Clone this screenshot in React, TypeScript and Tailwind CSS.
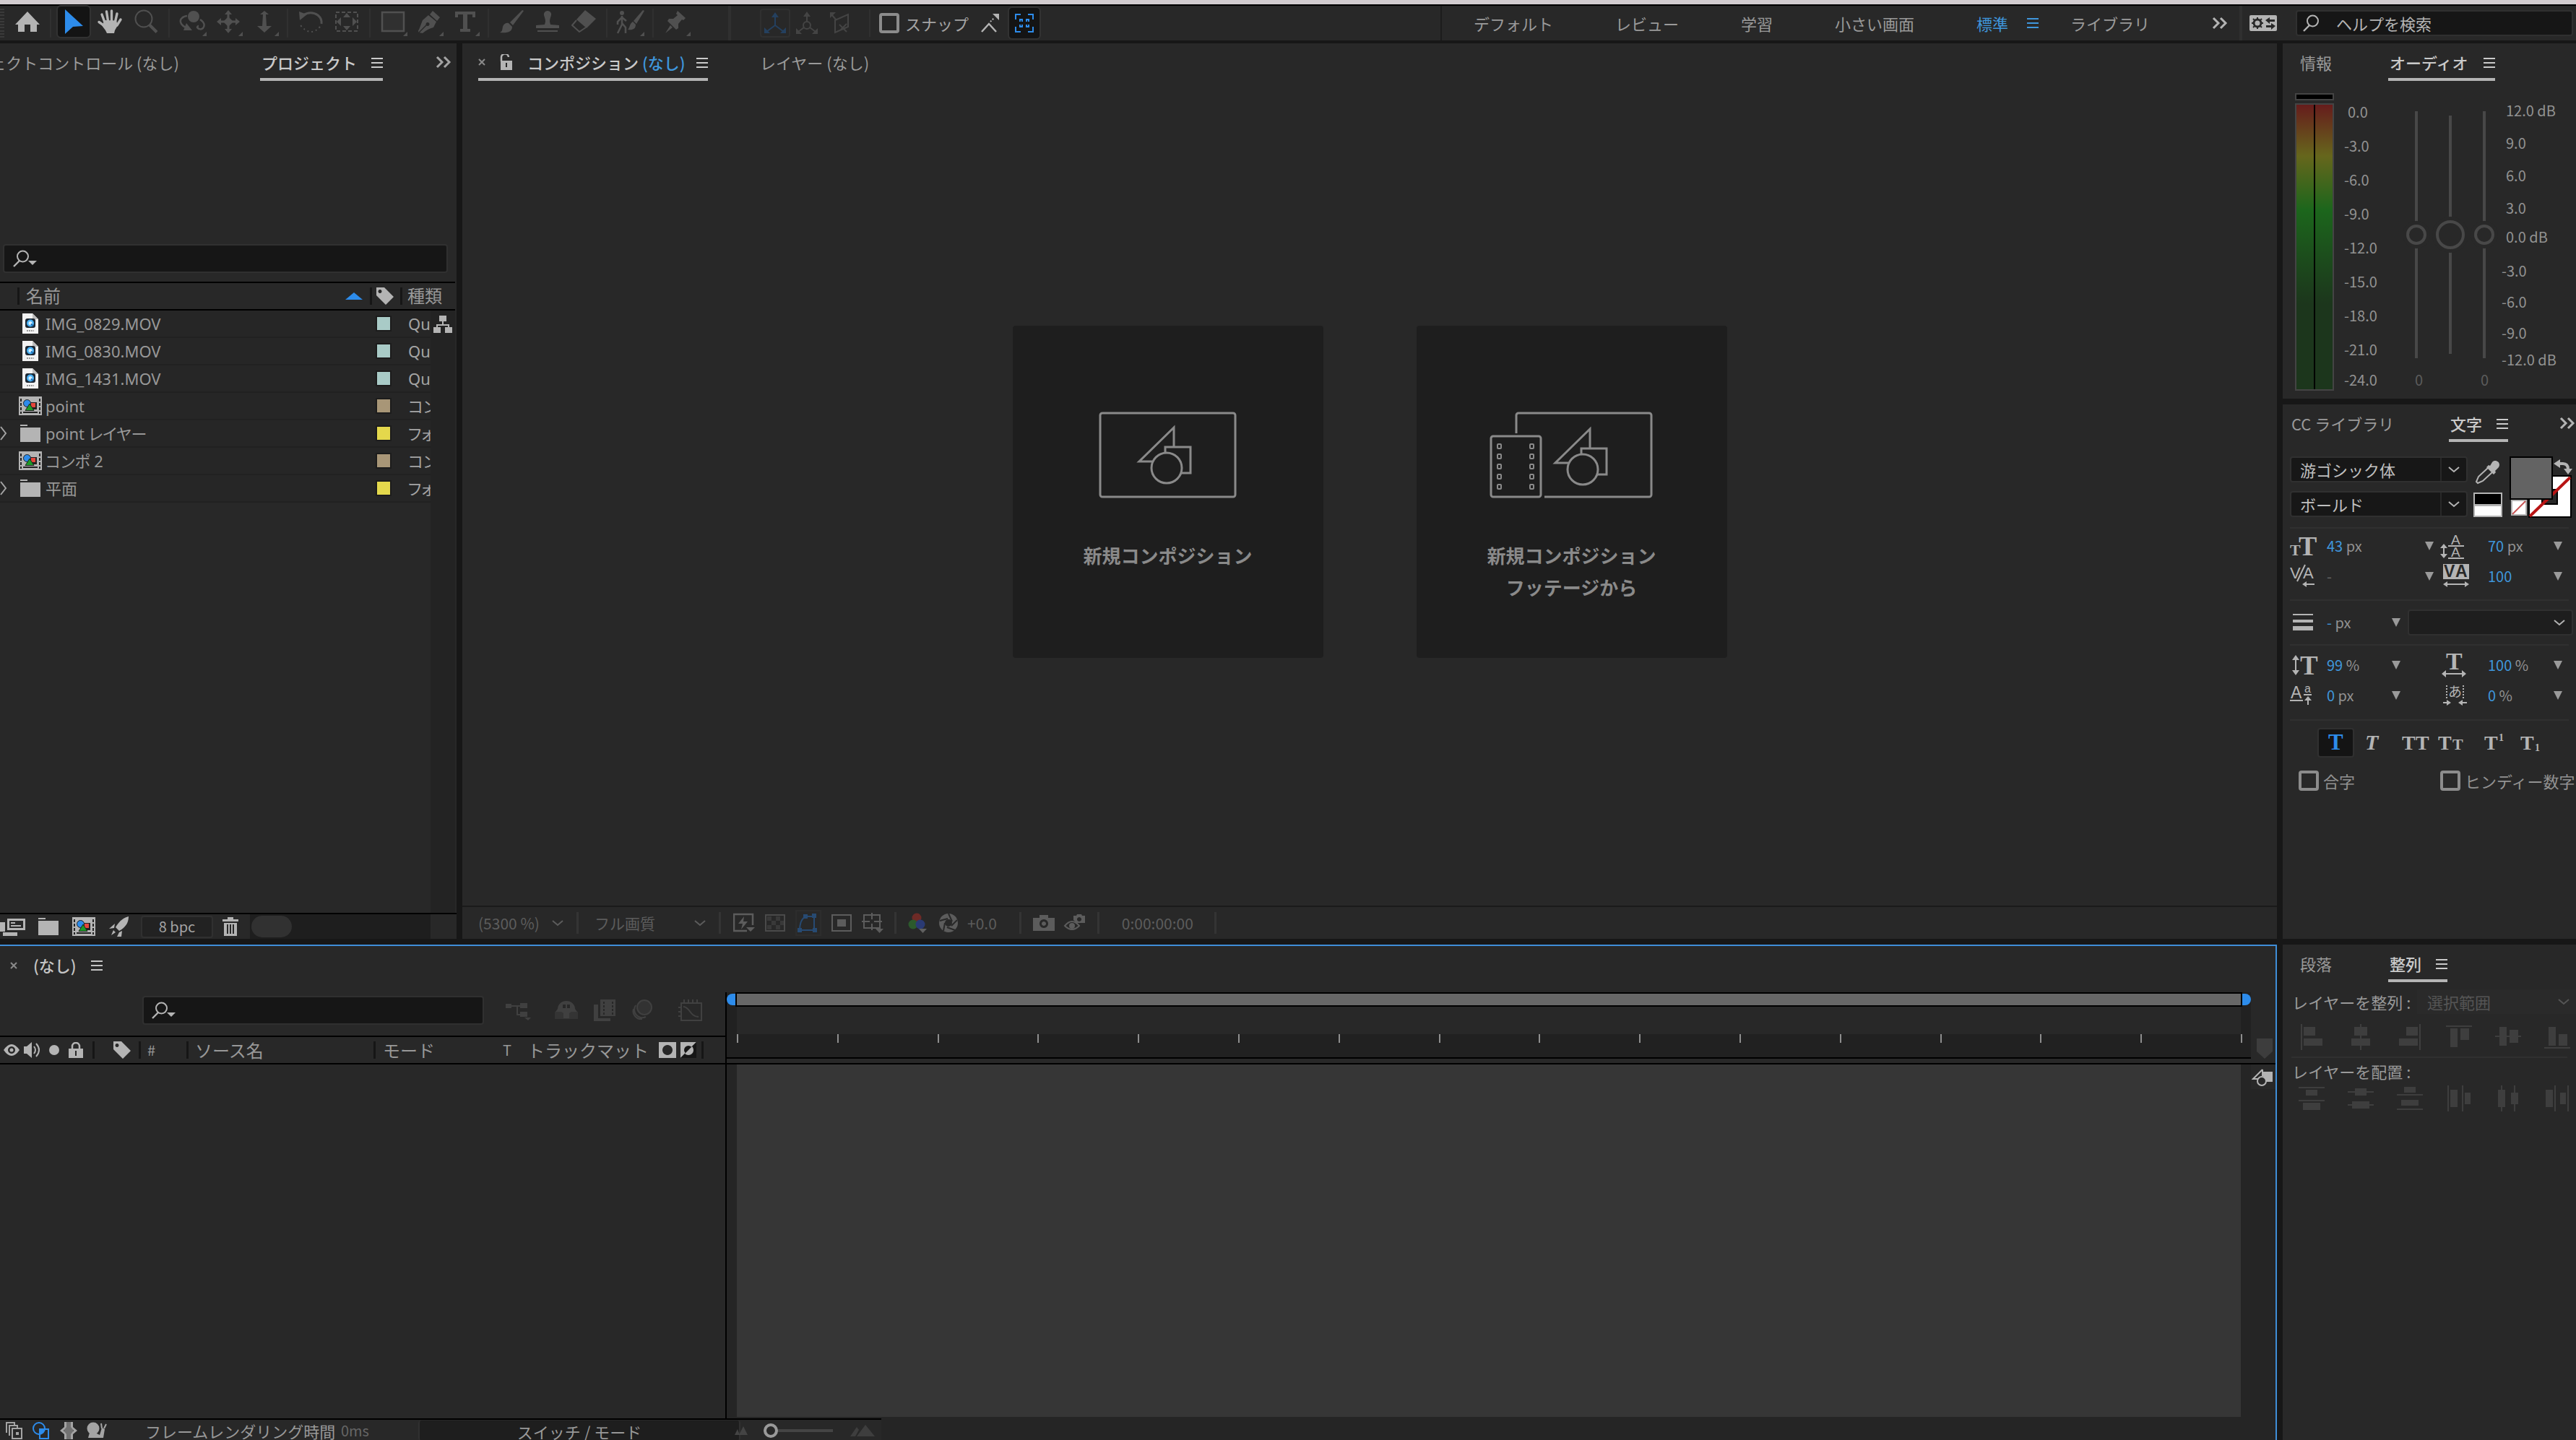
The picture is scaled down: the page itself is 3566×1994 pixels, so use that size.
import React, { ReactNode } from "react";

/* ---------- shared pieces ---------- */

type IconProps = { w?: number; h?: number; className?: string; children: ReactNode };

function Icon({ w = 36, h = 36, className = "", children }: IconProps) {
  return (
    <svg
      width={w}
      height={h}
      viewBox={`0 0 ${w} ${h}`}
      fill="currentColor"
      aria-hidden="true"
      className={`block shrink-0 ${className}`}
    >
      {children}
    </svg>
  );
}

const line = { fill: "none", stroke: "currentColor" } as const;

const MenuIcon = () => (
  <Icon w={16} h={14}>
    <path d="M0 0h16v2H0zM0 6h16v2H0zM0 12h16v2H0z" />
  </Icon>
);

const MoreIcon = () => (
  <Icon w={22} h={18}>
    <path d="M2 2l7 7-7 7M12 2l7 7-7 7" {...line} strokeWidth={3} />
  </Icon>
);

const CloseIcon = () => (
  <Icon w={10} h={12} className="text-[#8a8a8a]">
    <path d="M1 2l8 8M9 2l-8 8" {...line} strokeWidth={2} />
  </Icon>
);

const Chevron = () => (
  <Icon w={16} h={10}>
    <path d="M1 2l7 6 7-6" {...line} strokeWidth={2} />
  </Icon>
);

const Triangle = () => (
  <Icon w={12} h={12}>
    <path d="M0 0h12L6 12z" />
  </Icon>
);

const SearchIcon = ({ caret = false }: { caret?: boolean }) => (
  <Icon w={34} h={24}>
    <circle cx="13.500" cy="9" r="7.500" {...line} strokeWidth={2} />
    <path d="M9 15L1 23" {...line} strokeWidth={2.4} />
    {caret && <path d="M21 15h12l-6 6z" />}
  </Icon>
);

const TagIcon = () => (
  <Icon w={24} h={24}>
    <path fillRule="evenodd" d="M0 0h11l13 13-11 11L0 11zM5 3a2.500 2.500 0 1 0 .01 0z" />
  </Icon>
);

const CompIcon = () => (
  <Icon w={32} h={26}>
    <path d="M0 0h32v26H0z" />
    <path d="M2 3h2v4H2zM2 9h2v4H2zM2 15h2v4H2zM2 21h2v3H2zM28 3h2v4h-2zM28 9h2v4h-2zM28 15h2v4h-2zM28 21h2v3h-2zM6 21h20v2H6z" fill="#222" />
    <path d="M16 8h9v10h-9z" fill="#222" />
    <path d="M17 9h6v6h-6z" fill="#e5473c" />
    <circle cx="11.500" cy="9.500" r="5" fill="#2d8ceb" stroke="#222" strokeWidth="1" />
    <path d="M15 10l6 9.500H9z" fill="#1e9a28" stroke="#222" strokeWidth="1" />
  </Icon>
);

const FolderIcon = () => (
  <Icon w={28} h={24}>
    <path d="M0 0h10v2H0zM0 4h28v20H0z" />
  </Icon>
);

const MovieFileIcon = () => (
  <Icon w={22} h={28}>
    <path d="M0 0h14l8 8v20H0z" fill="#f2f2f2" />
    <path d="M14 0l8 8h-8z" fill="#bdbdbd" />
    <rect x="4" y="7" width="14" height="13" rx="3" fill="#1c2733" />
    <circle cx="11" cy="13.500" r="5" fill="#49b2f5" />
    <circle cx="11" cy="13.500" r="2.500" fill="#d6eeff" />
    <path d="M12 14.500l3 3" stroke="#1c6fb5" strokeWidth="2" />
    <path d="M6 24h10" stroke="#999" strokeWidth="2" strokeDasharray="2 1" />
  </Icon>
);

type TabProps = { active?: boolean; className?: string; children: ReactNode };

function Tab({ active = false, className = "", children }: TabProps) {
  return (
    <button
      type="button"
      className={`flex h-[52px] shrink-0 items-center justify-between border-b-4 pt-[6px] whitespace-nowrap ${
        active ? "border-[#b4b4b4] font-medium text-[#cacaca]" : "border-transparent text-[#9a9a9a]"
      } ${className}`}
    >
      <span className="pb-[3px]">{children}</span>
      {active && <MenuIcon />}
    </button>
  );
}

/* ---------- top tool bar ---------- */

const ToolSep = () => <div className="mx-[6px] h-[40px] w-[2px] shrink-0 bg-[#303030]" />;

type ToolProps = { label: string; more?: boolean; className?: string; children: ReactNode };

function Tool({ label, more = false, className = "text-[#505050]", children }: ToolProps) {
  return (
    <button
      type="button"
      aria-label={label}
      className={`relative flex h-[48px] w-[50px] shrink-0 items-center justify-center pb-1 ${className}`}
    >
      {children}
      {more && (
        <svg width="6" height="6" viewBox="0 0 6 6" fill="currentColor" className="absolute right-[5px] bottom-[6px]">
          <path d="M6 0v6H0z" />
        </svg>
      )}
    </button>
  );
}

function Toolbar() {
  const workspaces = [
    ["デフォルト", "ml-[44px] w-[196px]"],
    ["レビュー", "w-[174px]"],
    ["学習", "w-[130px]"],
    ["小さい画面", "w-[196px]"],
  ];
  return (
    <header className="flex h-[48px] shrink-0 items-center bg-[#282828]">
      <div className="flex h-[40px] w-[13px] shrink-0 flex-col justify-between">
        {Array.from({ length: 10 }, (_, i) => (
          <i key={i} className="h-[2px] w-[6px] bg-[#3a3a3a]" />
        ))}
      </div>
      <Tool label="ホーム" className="text-[#b4b4b4]">
        <Icon><path d="M18 4l17 18h-4v10h-9V22h-8v10H5V22H1z" /></Icon>
      </Tool>
      <ToolSep />
      <Tool label="選択ツール" className="text-[#2d8ceb]">
        <span className="flex h-[42px] w-[44px] items-center justify-center rounded-sm bg-[#141414] outline-2 outline-[#323232]">
          <Icon><path d="M6 1l25 23-14 1L6 35z" /></Icon>
        </span>
      </Tool>
      <Tool label="手のひらツール" className="text-[#b4b4b4]">
        <Icon>
          <path d="M11 19l-4-11M15.500 17L13.500 4M20.500 17V3M25.500 18l2.500-11M11 24l-8-5.500M28 23l5-8" {...line} strokeWidth={3.4} strokeLinecap="round" />
          <path d="M9.500 16l17.500.500 2 6.500-4 7-1 4H14l-2-4-6-8 3-1z" />
        </Icon>
      </Tool>
      <Tool label="ズームツール">
        <Icon>
          <circle cx="15" cy="14" r="11.500" {...line} strokeWidth={2} />
          <path d="M23 22.500l10 10" {...line} strokeWidth={4} />
        </Icon>
      </Tool>
      <ToolSep />
      <Tool label="カメラ周回ツール" more>
        <Icon>
          <circle cx="20" cy="11" r="8" />
          <path d="M11 10C3 11 0 16 3 21c2 3 5 5 9 6M29 15c6 4 7 8 4 12-2 2-6 2-8-1 0-1 1-2 2-2" {...line} strokeWidth={2.500} />
          <path d="M10 20l8 10H6z" />
        </Icon>
      </Tool>
      <Tool label="カメラ移動ツール" more>
        <Icon>
          <path d="M18 5v26M5 18h26" {...line} strokeWidth={3} />
          <path d="M18 2l5 6H13zM18 34l5-6H13zM2 18l6-5v10zM34 18l-6-5v10zM18 11l7 7-7 7-7-7z" />
        </Icon>
      </Tool>
      <Tool label="ドリーツール" more>
        <Icon>
          <path d="M16 8h4l1 16h-6z" />
          <path d="M18 3l6 5H12zM18 33L8 24h20z" />
        </Icon>
      </Tool>
      <ToolSep />
      <Tool label="回転ツール">
        <Icon>
          <path d="M8 9a15 13 0 0 1 20 0q6 5 5 12" {...line} strokeWidth={3} />
          <path d="M2 4l11 4-10 8z" />
          <path d="M31 25Q18 40 4 23" {...line} strokeWidth={2} strokeDasharray="2 4" />
        </Icon>
      </Tool>
      <Tool label="アンカーポイントツール">
        <Icon>
          <rect x="3" y="5" width="30" height="26" {...line} strokeWidth={2} strokeDasharray="5 3" />
          <path d="M18 6l5 6H13zM18 30l5-6H13zM4 18l6-6v12zM32 18l-6-6v12z" />
        </Icon>
      </Tool>
      <ToolSep />
      <Tool label="長方形ツール" more>
        <Icon><rect x="3" y="5" width="30" height="26" fill="#303030" stroke="currentColor" strokeWidth={2.500} /></Icon>
      </Tool>
      <Tool label="ペンツール" more>
        <Icon>
          <path d="M23 3l10 9-4 5-10-9z" />
          <path fillRule="evenodd" d="M17 9l11 9-4 8q-8 2-15 8l-5-1q-2-2 0-4l5-13zm-1 10a2.500 2.500 0 1 0 .01 0z" />
          <path d="M4 33l11-11" stroke="#282828" strokeWidth="1.500" />
        </Icon>
      </Tool>
      <Tool label="文字ツール" more>
        <Icon><path d="M4 4h28v8h-4V8h-7v20h4v4H11v-4h4V8H8v4H4z" /></Icon>
      </Tool>
      <ToolSep />
      <Tool label="ブラシツール">
        <Icon>
          <path d="M33 2l2 1-15 20-4-4z" />
          <path d="M14 20l5 5c0 7-6 9-17 8 4-2 3-4 4-8s5-6 8-5z" />
        </Icon>
      </Tool>
      <Tool label="コピースタンプツール">
        <Icon>
          <path d="M18 3a5 5 0 0 1 5 6c-1 4-2 5-2 9l1 4 12 1v4H2v-4l12-1 1-4c0-4-1-5-2-9a5 5 0 0 1 5-6zM4 30h28v2H4z" />
        </Icon>
      </Tool>
      <Tool label="消しゴムツール">
        <Icon>
          <path d="M20 2l15 12-13 13L8 15z" />
          <path d="M8 16L2 23l10 9 9-6" {...line} strokeWidth={2} />
        </Icon>
      </Tool>
      <ToolSep />
      <Tool label="ロトブラシツール" more>
        <Icon w={40}>
          <path d="M38 2l2 1-11 18-4-4z" />
          <path d="M24 18l4 4c0 6-4 8-11 7 3-2 2-8 7-11z" />
          <circle cx="9" cy="6" r="3" />
          <path d="M9 10v12l-6 12M9 20l5 6v8M9 12l-6 6v4M9 12l6 5" {...line} strokeWidth={2.500} />
        </Icon>
      </Tool>
      <ToolSep />
      <Tool label="パペットピンツール" more>
        <Icon>
          <path d="M20 3l11 10-3 3-2-1-5 6v6l-3 2L6 17l2-3h6l6-5-2-2zM10 23l3 3-10 8z" />
        </Icon>
      </Tool>

      <div className="ml-[47px] h-[48px] w-[4px] bg-[#303030]" />
      <div className="ml-[40px] flex items-center text-[#444]">
        <button type="button" aria-label="ローカル軸モード" className="flex h-[40px] w-[42px] items-center justify-center rounded-sm border-2 border-[#303030] text-[#24405f]">
          <Icon w={32} h={32}><path d="M16 6v13M16 19L4 28M16 19l12 9" {...line} strokeWidth={2} /><path d="M16 1l5 7H11zM1 30v-8l8 8zM31 30v-8l-8 8z" /></Icon>
        </button>
        <button type="button" aria-label="ワールド軸モード" className="flex w-[46px] justify-center">
          <Icon w={32} h={32}><circle cx="16" cy="19" r="5" {...line} strokeWidth={2} /><path d="M16 6v8M12 22l-8 6M20 22l8 6" {...line} strokeWidth={2} /><path d="M16 0l5 7H11zM1 31v-8l8 8zM31 31v-8l-8 8z" /></Icon>
        </button>
        <button type="button" aria-label="ビュー軸モード" className="flex w-[46px] justify-center">
          <Icon w={32} h={32}><path d="M9 12L27 4v17L9 29zM4 4l7 8M15 18l10 10M25 17l-8 8" {...line} strokeWidth={2} /><path d="M2 1h8l-8 8z" /></Icon>
        </button>
        <div className="ml-[17px] h-[38px] w-[2px] bg-[#303030]" />
      </div>
      <label className="ml-[12px] flex items-center gap-[8px] text-[#a4a4a4]">
        <input type="checkbox" className="h-[28px] w-[28px] appearance-none rounded-sm border-4 border-[#8c8c8c]" />
        スナップ
      </label>
      <button type="button" aria-label="スナップの拡張" className="ml-[16px] text-[#b4b4b4]">
        <Icon w={28} h={28}><path d="M2 26l10-11 10 11" {...line} strokeWidth={2.500} /><path d="M14 12l5-5" {...line} strokeWidth={2} strokeDasharray="2 2" /><path d="M17 1h9v9z" /></Icon>
      </button>
      <button type="button" aria-label="コラップスへのスナップ" className="ml-[12px] flex h-[42px] w-[42px] items-center justify-center rounded-sm bg-[#141414] text-[#2d8ceb] outline-2 outline-[#323232]">
        <Icon w={26} h={26}>
          <path d="M1 8V1h7M18 1h7v7M1 18v7h7M18 25h7v-7M7 11V8h3v3M16 11V8h3v3M7 15v3h3v-3M16 15v3h3v-3" {...line} strokeWidth={2} />
        </Icon>
      </button>

      <div className="flex-1" />
      <div className="h-[48px] w-[2px] shrink-0 bg-[#1c1c1c]" />
      <nav className="flex shrink-0 items-center text-[#9a9a9a]">
        {workspaces.map(([name, cls]) => (
          <button key={name} type="button" className={`shrink-0 text-left whitespace-nowrap ${cls}`}>
            {name}
          </button>
        ))}
        <button type="button" className="flex w-[130px] items-center gap-[26px] text-[#3f96dc]">
          標準 <MenuIcon />
        </button>
        <button type="button" className="w-[196px] text-left">ライブラリ</button>
        <button type="button" aria-label="その他のワークスペース" className="w-[38px] text-[#b4b4b4]"><MoreIcon /></button>
      </nav>
      <div className="h-[48px] w-[4px] shrink-0 bg-[#303030]" />
      <button type="button" aria-label="設定の同期" className="ml-[10px] shrink-0 text-[#b4b4b4]">
        <Icon w={38} h={22}>
          <rect width="38" height="22" rx="2" />
          <circle cx="11" cy="11" r="5" fill="none" stroke="#282828" strokeWidth="3" />
          <path d="M11 3v3M11 16v3M3 11h3M16 11h3M5 5l2 2M17 5l-2 2M5 17l2-2M17 17l-2-2" stroke="#282828" strokeWidth="2" />
          <path d="M22 7l6-4v3h7v3h-7v3zM36 15l-6-4v3h-7v3h7v3z" fill="#282828" />
        </Icon>
      </button>
      <label className="mr-[4px] ml-[26px] flex h-[36px] w-[384px] shrink-0 items-center rounded-sm border-2 border-[#303030] bg-[#161616] pl-[8px] text-[#b4b4b4]">
        <SearchIcon />
        <input aria-label="ヘルプを検索" placeholder="ヘルプを検索" className="ml-[12px] w-0 flex-1 bg-transparent outline-none placeholder:text-[#b4b4b4]" />
      </label>
    </header>
  );
}

/* ---------- project panel ---------- */

const items = [
  { name: "IMG_0829.MOV", icon: "movie", color: "#a9cbc7", kind: "QuickTime" },
  { name: "IMG_0830.MOV", icon: "movie", color: "#a9cbc7", kind: "QuickTime" },
  { name: "IMG_1431.MOV", icon: "movie", color: "#a9cbc7", kind: "QuickTime" },
  { name: "point", icon: "comp", color: "#a89677", kind: "コンポ" },
  { name: "point レイヤー", icon: "folder", color: "#e4d84c", kind: "フォルダー" },
  { name: "コンポ 2", icon: "comp", color: "#a89677", kind: "コンポ" },
  { name: "平面", icon: "folder", color: "#e4d84c", kind: "フォルダー" },
];

function ProjectPanel() {
  return (
    <section className="flex w-[632px] shrink-0 flex-col bg-[#282828]">
      <div className="flex h-[60px] items-start">
        <div className="flex w-[248px] shrink-0 justify-end overflow-hidden"><Tab>ェクトコントロール (なし)</Tab></div>
        <Tab active className="ml-[112px] w-[170px]"><span className="pl-[2px]">プロジェクト</span></Tab>
        <button type="button" aria-label="その他のパネル" className="mt-[17px] ml-[73px] text-[#a4a4a4]"><MoreIcon /></button>
      </div>
      <div className="h-[218px]" />
      <label className="mr-[12px] ml-[4px] flex h-[40px] items-center rounded-sm border-2 border-[#303030] bg-[#161616] pl-[12px] text-[#b4b4b4]">
        <SearchIcon caret />
        <input aria-label="プロジェクトを検索" className="w-0 flex-1 bg-transparent outline-none" />
      </label>
      <div className="mt-[12px] mr-[2px] flex-1 bg-[linear-gradient(to_right,#282828_596px,#232323_596px)]">
        <table className="w-full table-fixed border-collapse font-['Noto_Sans','Noto_Sans_CJK_JP',sans-serif] text-[#989898] [font-feature-settings:'palt']">
          <colgroup>
            <col className="w-[512px]" />
            <col className="w-[42px]" />
            <col className="w-[42px]" />
            <col />
          </colgroup>
          <thead>
            <tr className="h-[38px] border-y-2 border-black bg-[#282828] text-[24px]">
              <th className="p-0 font-normal">
                <div className="ml-[24px] flex h-[24px] items-center justify-between border-l-3 border-[#161616] pr-[10px] pl-[9px]">
                  名前
                  <Icon w={24} h={10} className="text-[#2d8ceb]"><path d="M12 0l12 10H0z" /></Icon>
                </div>
              </th>
              <th className="p-0 text-[#b4b4b4]"><div className="h-[24px] border-l-3 border-[#161616] pl-[6px]" aria-label="ラベル"><TagIcon /></div></th>
              <th colSpan={2} className="p-0 font-normal"><div className="flex h-[24px] items-center border-l-3 border-[#161616] pl-[7px]">種類</div></th>
            </tr>
          </thead>
          <tbody>
            {items.map((it, i) => (
              <tr key={it.name} className="h-[38px]">
                <td className="border-b-2 border-[#212121] bg-[#262626] p-0">
                  <div className="flex h-[36px] items-center">
                    <span className="w-[26px] text-[#a4a4a4]">
                      {it.icon === "folder" && <Icon w={10} h={20}><path d="M1 1l7 9-7 9" {...line} strokeWidth={2} /></Icon>}
                    </span>
                    <span className="flex w-[32px] justify-center text-[#b4b4b4]">
                      {it.icon === "movie" ? <MovieFileIcon /> : it.icon === "comp" ? <CompIcon /> : <FolderIcon />}
                    </span>
                    <span className="ml-[5px]">{it.name}</span>
                  </div>
                </td>
                <td className="border-b-2 border-[#212121] bg-[#262626] p-0 pl-[8px]">
                  <div className="h-[22px] w-[22px] border-2 border-[#1c1c1c]" style={{ backgroundColor: it.color }} />
                </td>
                <td className="overflow-hidden border-b-2 border-[#212121] bg-[#262626] p-0 pl-[11px] whitespace-nowrap text-[#a4a4a4]">{it.kind}</td>
                <td className="p-0 pl-[4px] text-[#b4b4b4]">
                  {i === 0 && (
                    <button type="button" aria-label="フローチャート" className="block">
                      <Icon w={26} h={24}><path d="M8 0h10v8H8zM0 16h10v8H0zM16 16h10v8H16z" /><path d="M13 8v5M5 16v-3h16v3" {...line} strokeWidth={2} /></Icon>
                    </button>
                  )}
                </td>
              </tr>
            ))}
          </tbody>
        </table>
      </div>
      <div className="flex h-[36px] items-center border-t-2 border-black text-[#b4b4b4]">
        <button type="button" aria-label="フッテージを変換">
          <Icon w={36} h={28}><path fillRule="evenodd" d="M10 3h25v16H10zm3 3v10h19V6zM15 8h6v2h-6zM15 12h14v2H15zM0 8h7v13H0zM4 22h20v5H4z" /></Icon>
        </button>
        <button type="button" aria-label="新規フォルダー" className="ml-[17px]"><FolderIcon /></button>
        <button type="button" aria-label="新規コンポジション" className="ml-[19px]"><CompIcon /></button>
        <button type="button" aria-label="プロジェクト設定" className="ml-[19px]">
          <Icon w={28} h={28}><path d="M27 0c0 9-4 15-13 20l-5-5C14 7 19 2 27 0zM8 10L0 17l7-1zM18 20l-1 8-6 0 3-6zM6 19l3 3-6 4z" /></Icon>
        </button>
        <button type="button" className="ml-[16px] h-[31px] w-[100px] rounded-sm border-2 border-[#303030] bg-[#222] text-[20px] leading-none text-[#a4a4a4]">8 bpc</button>
        <button type="button" aria-label="削除" className="ml-[13px]">
          <Icon w={22} h={26}><path fillRule="evenodd" d="M7 0h8v3h7v3H0V3h7zM2 8h18v18H2zm4 2v13h2V10zm4 0v13h2V10zm4 0v13h2V10z" /></Icon>
        </button>
        <div className="ml-[16px] h-[34px] w-[250px] bg-[#1e1e1e] p-[2px]"><div className="h-[30px] w-[56px] rounded-full bg-[#313131]" /></div>
      </div>
    </section>
  );
}

/* ---------- composition viewer ---------- */

const Shapes = () => (
  <g fill="none" stroke="#8a8a8a" strokeWidth="3">
    <path d="M74 69H56l48-47v27" />
    <path d="M92 58V49h35v36h-13" />
    <circle cx="94" cy="78" r="21" />
  </g>
);

function ViewerSelect({ value, label, className }: { value: string; label: string; className: string }) {
  return (
    <div className={`relative flex items-center ${className}`}>
      <select aria-label={label} className="w-full appearance-none bg-transparent outline-none">
        <option>{value}</option>
      </select>
      <span className="pointer-events-none absolute right-0"><Chevron /></span>
    </div>
  );
}

const FootSep = ({ className }: { className: string }) => <div className={`h-[30px] w-[3px] shrink-0 bg-[#343434] ${className}`} />;

function CompositionPanel() {
  return (
    <section className="flex min-w-0 flex-1 flex-col bg-[#282828]">
      <div className="flex h-[60px] items-start">
        <Tab active className="ml-[22px] w-[318px]">
          <span className="flex items-center gap-[20px]">
            <CloseIcon />
            <Icon w={18} h={22} className="text-[#b4b4b4]"><path d="M2 10V5a5 5 0 0 1 10-1" {...line} strokeWidth={2.500} /><path fillRule="evenodd" d="M1 9h16v13H1zm7 3v6h2v-6z" /></Icon>
            <span>コンポジション <span className="text-[#3f96dc]">(なし)</span></span>
          </span>
        </Tab>
        <Tab className="ml-[72px]">レイヤー (なし)</Tab>
      </div>
      <div className="flex flex-1 items-start justify-center gap-[129px] pt-[331px] text-[26px] leading-[44px] font-bold text-[#8a8a8a]">
        <button type="button" className="flex h-[460px] w-[430px] flex-col items-center rounded-sm bg-[#1e1e1e] pt-[119px]">
          <svg width="192" height="120" viewBox="0 0 192 120" aria-hidden="true">
            <rect x="2" y="2" width="187" height="116" rx="3" fill="none" stroke="#8a8a8a" strokeWidth="3" />
            <Shapes />
          </svg>
          <span className="mt-[57px]">新規コンポジション</span>
        </button>
        <button type="button" className="flex h-[460px] w-[430px] flex-col items-center rounded-sm bg-[#1e1e1e] pt-[119px]">
          <svg width="228" height="120" viewBox="0 0 228 120" aria-hidden="true" fill="none" stroke="#8a8a8a" strokeWidth="3">
            <path d="M37 30V5a3 3 0 0 1 3-3h181a3 3 0 0 1 3 3v110a3 3 0 0 1-3 3H76" />
            <rect x="2" y="34" width="69" height="84" rx="3" />
            {[0, 1, 2, 3, 4].map((i) => (
              <g key={i} strokeWidth="2">
                <rect x="11" y={45 + i * 14} width="5" height="6" rx="1" />
                <rect x="56" y={45 + i * 14} width="5" height="6" rx="1" />
              </g>
            ))}
            <g transform="translate(35 2)"><Shapes /></g>
          </svg>
          <span className="mt-[57px]">新規コンポジション<br />フッテージから</span>
        </button>
      </div>
      <div className="flex h-[46px] items-center border-t-2 border-[#1a1a1a] text-[21px] text-[#5c5c5c]">
        <ViewerSelect label="拡大率" value="(5300 %)" className="ml-[22px] w-[118px]" />
        <FootSep className="ml-[18px]" />
        <ViewerSelect label="解像度" value="フル画質" className="ml-[22px] w-[154px]" />
        <FootSep className="ml-[18px]" />
        <div className="flex items-center gap-[14px] pl-[17px]">
          <button type="button" aria-label="高速プレビュー"><Icon w={30} h={28}><path d="M19 25H1V2h26v15" {...line} strokeWidth={2.500} /><path d="M15 5L7 15h6l-2 8 9-11h-6zM18 20h12l-6 6z" /></Icon></button>
          <button type="button" aria-label="透明グリッド" className="text-[#4a4a4a]"><Icon w={28} h={24}><rect x="1" y="1" width="26" height="22" {...line} strokeWidth={2} /><path d="M3 3h6v6H3zM15 3h6v6h-6zM9 9h6v6H9zM21 9h5v6h-5zM3 15h6v6H3zM15 15h6v6h-6z" opacity="0.500" /></Icon></button>
          <button type="button" aria-label="マスクとシェイプのパス" className="flex h-[36px] w-[36px] items-center justify-center border-2 border-[#2d2d2d] text-[#274a72]"><Icon w={30} h={26}><path d="M3 23C3 14 6 7 11 4h12v19z" {...line} strokeWidth={2} /><path d="M0 20h6v6H0zM21 20h6v6h-6zM20 0h6v6h-6zM8 1h6v6H8z" /></Icon></button>
          <button type="button" aria-label="関心領域"><Icon w={28} h={24}><rect x="1" y="1" width="26" height="22" {...line} strokeWidth={2} /><path d="M8 7h12v10H8z" /></Icon></button>
          <button type="button" aria-label="グリッドとガイド"><Icon w={32} h={28}><path d="M3 3h22v18H3zM14 0v9M14 15v9M0 12h11M17 12h11" {...line} strokeWidth={2} /><path d="M19 22h11l-5.500 6z" /></Icon></button>
        </div>
        <FootSep className="ml-[13px]" />
        <button type="button" aria-label="チャンネル" className="ml-[16px]">
          <svg width="28" height="28" viewBox="0 0 28 28" aria-hidden="true"><circle cx="12" cy="7" r="6.500" fill="#6e2a26" /><circle cx="7" cy="16" r="6.500" fill="#2c5a2c" /><circle cx="17" cy="16" r="6.500" fill="#2a3a74" /><path d="M15 22h11l-5.500 6z" fill="#606060" /></svg>
        </button>
        <button type="button" aria-label="露出をリセット" className="ml-[15px]">
          <Icon w={26} h={26}><circle cx="13" cy="13" r="9" {...line} strokeWidth={8} /><path d="M13 0l5 11M25 9l-8 8M22 23l-11-4M6 24l2-11M1 10l11-3" stroke="#282828" strokeWidth="2" /></Icon>
        </button>
        <button type="button" className="ml-[13px]">+0.0</button>
        <FootSep className="ml-[31px]" />
        <button type="button" aria-label="スナップショット" className="ml-[16px]"><Icon w={30} h={22}><path fillRule="evenodd" d="M9 0h12v4h9v18H0V4h9zM15 6a6 6 0 1 0 .01 0zm0 3a3 3 0 1 1-.01 0z" /></Icon></button>
        <button type="button" aria-label="スナップショットを表示" className="ml-[12px]"><Icon w={32} h={26}><path d="M2 17q10-12 20 0-10 10-20 0z" {...line} strokeWidth={2} /><circle cx="12" cy="17" r="4" /><path fillRule="evenodd" d="M14 3h4l1-2h6l1 2h4v10H18l-4-4zM22 5a3 3 0 1 0 .01 0z" /></Icon></button>
        <FootSep className="ml-[15px]" />
        <button type="button" className="ml-[31px]">0:00:00:00</button>
        <FootSep className="ml-[29px]" />
      </div>
    </section>
  );
}

/* ---------- timeline ---------- */

const HeadSep = () => <div className="h-[24px] w-[3px] shrink-0 bg-[#161616]" />;

function TimelinePanel() {
  return (
    <section className="flex min-h-0 min-w-0 flex-1 flex-col border-t-2 border-r-2 border-[#3f8ed8] bg-[#282828]">
      <div className="flex min-h-0 flex-1">
        <div className="flex w-[1004px] shrink-0 flex-col">
          <div className="flex h-[54px] items-center pl-[14px] font-medium text-[#c4c4c4]">
            <CloseIcon />
            <span className="mr-[20px] ml-[22px] pb-[3px]">(なし)</span>
            <MenuIcon />
          </div>
          <div className="flex h-[70px] items-center text-[#404040]">
            <label className="ml-[197px] flex h-[40px] w-[473px] items-center rounded-sm border-2 border-[#303030] bg-[#161616] pl-[11px] text-[#b4b4b4]">
              <SearchIcon caret />
              <input aria-label="タイムラインを検索" className="w-0 flex-1 bg-transparent outline-none" />
            </label>
            <button type="button" aria-label="ミニフローチャート" className="ml-[30px]"><Icon w={36} h={28}><path d="M0 5h8v6H0zM20 4h10v7H20zM20 16h10v7H20zM26 24h9l-4 4z" /><path d="M8 8h12M16 8v12h4" {...line} strokeWidth={2} /></Icon></button>
            <button type="button" aria-label="シャイレイヤーを隠す" className="ml-[32px]"><Icon w={32} h={28}><path d="M0 16h32v10H0z" opacity="0.500" /><path fillRule="evenodd" d="M4 12a12 11 0 0 1 24 0l3 4h-8l-3 2v7h-8v-7l-3-2H1zm7-6v5h4V6zm6 0v5h4V6z" /></Icon></button>
            <button type="button" aria-label="フレームブレンド" className="ml-[22px]"><Icon w={30} h={30}><path fillRule="evenodd" d="M9 0h21v23H9zm4 3v3h2V3zm0 5v3h2V8zm0 5v3h2v-3zm0 5v3h2v-3zM25 3v3h2V3zm0 5v3h2V8zm0 5v3h2v-3zm0 5v3h2v-3zM0 7h6v19h17v4H0z" /></Icon></button>
            <button type="button" aria-label="モーションブラー" className="ml-[22px]"><Icon w={30} h={30}><circle cx="18" cy="11" r="10" fillOpacity="0.400" stroke="currentColor" strokeWidth={2} /><path d="M6 8a11 11 0 0 0 14 16M3 13a11 11 0 0 0 12 14" {...line} strokeWidth={2} /></Icon></button>
            <button type="button" aria-label="グラフエディター" className="ml-[35px]"><Icon w={34} h={30}><path d="M4 5h28v24H4zM7 10c9 0 9 14 21 14M8 0v5M14 0v5M20 0v5M26 0v5M0 11h4M0 17h4M0 23h4" {...line} strokeWidth={2} /></Icon></button>
          </div>
          <div className="flex h-[40px] shrink-0 items-center overflow-hidden border-y-2 border-black text-[24px] text-[#989898]">
            <div className="flex w-[128px] items-center text-[#b4b4b4]">
              <Icon w={22} h={16} className="ml-[5px]"><path fillRule="evenodd" d="M0 8q11-16 22 0-11 16-22 0zm11-5a5 5 0 1 0 .01 0z" /><circle cx="11" cy="8" r="2.500" /></Icon>
              <Icon w={24} h={22} className="ml-[6px]"><path d="M0 6h4l7-6v22l-7-6H0z" /><path d="M14 6q4 5 0 10M17 2q8 9 0 18" {...line} strokeWidth={2} /></Icon>
              <Icon w={14} h={14} className="ml-[11px]"><circle cx="7" cy="7" r="7" /></Icon>
              <Icon w={20} h={22} className="ml-[13px]"><path d="M5 10V6a5 5 0 0 1 10 0v4" {...line} strokeWidth={2.500} /><path fillRule="evenodd" d="M0 9h20v13H0zm9 3v7h2v-7z" /></Icon>
            </div>
            <HeadSep />
            <div className="w-[61px] pl-[26px] text-[#b4b4b4]"><TagIcon /></div>
            <HeadSep />
            <div className="w-[63px] pl-[9px] text-[20px]">#</div>
            <HeadSep />
            <div className="w-[256px] pl-[9px]">ソース名</div>
            <HeadSep />
            <div className="w-[176px] pl-[10px]">モード</div>
            <div className="w-[34px] text-[20px]">T</div>
            <div className="w-[182px]">トラックマット</div>
            <div className="flex w-[59px] gap-[6px] text-[#b4b4b4]">
              <Icon w={24} h={22}><path fillRule="evenodd" d="M0 0h24v22H0zM12 4a7 7 0 1 0 .01 0z" /></Icon>
              <Icon w={22} h={22}><path d="M0 0h22L0 22z" /><path d="M22 0v22H0z" fill="#161616" /><circle cx="11" cy="11" r="6" fill="#161616" /><path d="M6 16L16 6a6 6 0 0 1-10 10z" fill="#b4b4b4" /></Icon>
            </div>
            <HeadSep />
          </div>
          <div className="flex-1 bg-[#282828]" />
        </div>

        <div className="flex min-w-0 flex-1 flex-col">
          <div className="h-[64px] shrink-0" />
          <div className="flex h-[98px] shrink-0 border-l-2 border-black">
            <div className="flex min-w-0 flex-1 flex-col bg-[#212121]">
              <div className="flex h-[20px] items-center">
                <i className="h-[16px] w-[12px] rounded-l-full bg-[#2d8ceb]" />
                <div className="h-[20px] flex-1 border-2 border-black bg-[#676767]" />
                <i className="h-[16px] w-[12px] rounded-r-full bg-[#2d8ceb]" />
              </div>
              <div className="mx-[14px] h-[38px] bg-[#282828]" />
              <div className="flex h-[34px] items-start justify-between border-b-2 border-black pr-[12px] pl-[14px]">
                {Array.from({ length: 16 }, (_, i) => (
                  <i key={i} className="h-[12px] w-[2px] bg-[#8e8e8e]" />
                ))}
              </div>
              <div className="h-[6px] bg-[#282828]" />
            </div>
            <div className="flex w-[34px] flex-col items-center justify-end pb-[6px] pl-[4px] text-[#3d3d3d]">
              <Icon w={22} h={28}><path d="M0 0h22v18L11 28 0 18z" /></Icon>
            </div>
          </div>
          <div className="flex flex-1 border-t-2 border-l-2 border-black bg-[#252525]">
            <div className="mx-[14px] mb-[2px] flex-1 bg-[#363636]" />
            <div className="h-[34px] w-[34px] bg-[#282828] pt-[4px] pl-[1px]">
              <button type="button" aria-label="コンポジションを表示" className="block text-[#b4b4b4]">
                <Icon w={30} h={28}><path d="M16 6h13v14H16z" /><path d="M15 3v9M15 3L2 16h8" {...line} strokeWidth={2} /><circle cx="14" cy="19" r="6" fill="#282828" stroke="currentColor" strokeWidth={2} /></Icon>
              </button>
            </div>
          </div>
        </div>
      </div>
      <div className="flex h-[30px] shrink-0 overflow-hidden bg-[#252525]">
        <div className="flex w-[1220px] items-center border-t-2 border-black bg-[#282828] pt-[2px] text-[#989898]">
          <Icon w={24} h={24} className="ml-[8px] text-[#a4a4a4]"><path d="M1 15V1h11v4M5 19V5h11v4" {...line} strokeWidth={2} /><path fillRule="evenodd" d="M8 8h15v16H8zm2 2v12h11V10zm4 4h4v4h-4z" /></Icon>
          <Icon w={24} h={24} className="ml-[13px] text-[#2d8ceb]"><circle cx="9" cy="9" r="8" {...line} strokeWidth={2} /><path d="M10 10h12v13H10z" {...line} strokeWidth={2} /><path d="M10 10h7a8 8 0 0 1-7 7z" /></Icon>
          <Icon w={24} h={24} className="ml-[14px] text-[#a4a4a4]"><path d="M6 0h12v24H6z" opacity="0.600" /><path d="M6 0h3v7l-4 5 4 5v7H6v-7L0 12l6-5zM18 0h-3v7l4 5-4 5v7h3v-7l6-5-6-5z" /></Icon>
          <Icon w={28} h={24} className="ml-[13px] text-[#a4a4a4]"><circle cx="9" cy="9" r="8.500" /><path d="M4 15h8l6 3 3-10 4 2-2 12H2z" /><path d="M21 9l-1-7M24 9l3-6" {...line} strokeWidth={2} /></Icon>
          <span className="ml-[53px] w-[271px] whitespace-nowrap">フレームレンダリング時間</span>
          <span className="w-[107px] text-[20px] text-[#666]">0ms</span>
          <button type="button" className="h-[28px] w-[446px] rounded-sm border-x-2 border-[#303030] bg-[#1e1e1e]">スイッチ / モード</button>
          <Icon w={18} h={12} className="ml-[-8px] text-[#444]"><path d="M0 12l4-8 3 8zM6 12l6-12 6 12z" /></Icon>
          <input
            type="range"
            aria-label="タイムラインの拡大"
            defaultValue={0}
            className="ml-[22px] h-[20px] w-[96px] appearance-none bg-[linear-gradient(#444,#444)] bg-[length:100%_4px] bg-center bg-no-repeat [&::-webkit-slider-thumb]:h-[20px] [&::-webkit-slider-thumb]:w-[20px] [&::-webkit-slider-thumb]:appearance-none [&::-webkit-slider-thumb]:rounded-full [&::-webkit-slider-thumb]:border-4 [&::-webkit-slider-thumb]:border-[#9a9a9a] [&::-webkit-slider-thumb]:bg-[#282828]"
          />
          <Icon w={34} h={16} className="ml-[24px] text-[#3e3e3e]"><path d="M0 16l9-13 3 4-5 9zM9 16L21 0l13 16z" /></Icon>
        </div>
      </div>
    </section>
  );
}

/* ---------- audio panel ---------- */

const meterLabels = ["0.0", "-3.0", "-6.0", "-9.0", "-12.0", "-15.0", "-18.0", "-21.0", "-24.0"];
const levelLabels = ["12.0 dB", "9.0", "6.0", "3.0", "0.0 dB", "-3.0", "-6.0", "-9.0", "-12.0 dB"];

const faderBase =
  "appearance-none [writing-mode:vertical-lr] bg-[linear-gradient(#484848,#484848)] bg-[length:4px_100%] bg-center bg-no-repeat [&::-webkit-slider-thumb]:appearance-none [&::-webkit-slider-thumb]:rounded-full [&::-webkit-slider-thumb]:border-4 [&::-webkit-slider-thumb]:border-[#484848] [&::-webkit-slider-thumb]:bg-[#282828] [&::-webkit-slider-thumb]:shadow-[0_0_0_5px_#282828]";
const smallFader = `${faderBase} h-[342px] w-[28px] [&::-webkit-slider-thumb]:h-[28px] [&::-webkit-slider-thumb]:w-[28px]`;
const bigFader = `${faderBase} h-[330px] w-[40px] [&::-webkit-slider-thumb]:h-[40px] [&::-webkit-slider-thumb]:w-[40px]`;

function AudioPanel() {
  return (
    <section className="h-[492px] shrink-0 bg-[#282828]">
      <div className="flex h-[60px] items-start">
        <Tab className="ml-[24px]">情報</Tab>
        <Tab active className="ml-[78px] w-[148px]"><span className="pl-[2px]">オーディオ</span></Tab>
      </div>
      <div className="flex text-[20px] text-[#929292]">
        <div className="mt-[9px] ml-[17px] w-[54px]">
          <div className="h-[10px] border-2 border-[#444] bg-black" />
          <div className="mt-[4px] flex h-[398px] justify-center border-2 border-[#444] bg-[linear-gradient(#661c1c_0%,#66661c_18%,#1c661c_37%,#1c4c1c_54%,#1c361c_70%)]">
            <div className="w-[2px] bg-black" />
          </div>
        </div>
        <ul className="ml-[14px] w-[74px] pt-[20px]">
          {meterLabels.map((t, i) => (
            <li key={t} className={`${i === 7 ? "h-[42px]" : "h-[47px]"} ${i === 0 ? "pl-[5px]" : ""}`}>{t}</li>
          ))}
        </ul>
        <div className="w-[130px] pt-[34px]">
          <div className="flex h-[342px] items-center gap-[13px] pl-[12px]">
            <input type="range" aria-label="左レベル" min={-12} max={12} defaultValue={0} className={smallFader} />
            <input type="range" aria-label="マスターレベル" min={-12} max={12} defaultValue={0} className={bigFader} />
            <input type="range" aria-label="右レベル" min={-12} max={12} defaultValue={0} className={smallFader} />
          </div>
          <div className="mt-[15px] flex justify-between pr-[4px] pl-[24px] text-[#5c5c5c]">
            <span>0</span>
            <span>0</span>
          </div>
        </div>
        <ul className="pt-[18px] whitespace-nowrap">
          {levelLabels.map((t, i) => (
            <li key={t} className={`${i < 3 ? "h-[45px]" : i === 3 ? "h-[40px]" : i === 4 ? "h-[47px]" : i === 7 ? "h-[37px]" : "h-[43px]"} ${i < 5 ? "pl-[20px]" : "pl-[14px]"}`}>{t}</li>
          ))}
        </ul>
      </div>
    </section>
  );
}

/* ---------- character panel ---------- */

function FontSelect({ label, value }: { label: string; value: string }) {
  return (
    <div className="relative flex h-[36px] w-[246px] rounded-sm border-2 border-[#303030] bg-[#171717]">
      <select aria-label={label} className="w-full appearance-none bg-transparent pl-[12px] text-[#c0c0c0] outline-none">
        <option>{value}</option>
      </select>
      <span className="pointer-events-none absolute inset-y-0 right-0 flex w-[36px] items-center justify-center border-l-2 border-[#282828] text-[#b4b4b4]"><Chevron /></span>
    </div>
  );
}

type FieldProps = { icon: ReactNode; value: string; unit?: string; label: string; iconClass: string; valueClass: string; dim?: boolean };

function Field({ icon, value, unit = "", label, iconClass, valueClass, dim = false }: FieldProps) {
  return (
    <div className="flex h-[42px] shrink-0 items-center">
      <span className={`flex text-[#b4b4b4] ${iconClass}`}>{icon}</span>
      <button type="button" aria-label={label} className={`text-left whitespace-nowrap ${dim ? "text-[#666]" : "text-[#3f96dc]"} ${valueClass}`}>
        {value} <span className="text-[#929292]">{unit}</span>
      </button>
      <button type="button" aria-label={`${label}のメニュー`} className="text-[#9a9a9a]"><Triangle /></button>
    </div>
  );
}

const Glyph = ({ x, y, size, weight = 400, style = "normal", fill = "currentColor", family = "Liberation Serif, serif", children }: { x: number; y: number; size: number; weight?: number; style?: string; fill?: string; family?: string; children: string }) => (
  <text x={x} y={y} fontSize={size} fontWeight={weight} fontStyle={style} fill={fill} fontFamily={family}>{children}</text>
);

const sans = "Liberation Sans, sans-serif";
const Rule = () => <div className="mx-[10px] h-[2px] shrink-0 bg-[#303030]" />;
const leftField = { iconClass: "w-[51px]", valueClass: "w-[136px]" };
const leftNarrow = { iconClass: "w-[51px]", valueClass: "w-[90px]" };
const rightField = { iconClass: "w-[66px]", valueClass: "w-[91px]" };

function CharacterPanel() {
  return (
    <section className="mt-[8px] flex min-h-0 flex-1 flex-col overflow-hidden bg-[#282828] text-[20px]">
      <div className="flex h-[72px] shrink-0 items-start text-[22px]">
        <Tab className="ml-[12px]">CC ライブラリ</Tab>
        <Tab active className="ml-auto w-[82px]"><span className="pl-[2px]">文字</span></Tab>
        <button type="button" aria-label="その他のパネル" className="mt-[17px] mr-[1px] ml-[71px] text-[#b4b4b4]"><MoreIcon /></button>
      </div>
      <div className="flex h-[98px] shrink-0 items-start pl-[10px] text-[22px]">
        <div className="flex flex-col gap-[12px]">
          <FontSelect label="フォント" value="游ゴシック体" />
          <FontSelect label="フォントスタイル" value="ボールド" />
        </div>
        <div className="ml-[8px] flex w-[40px] flex-col gap-[11px] pt-[5px] text-[#b4b4b4]">
          <button type="button" aria-label="スポイト" className="pl-[2px]">
            <Icon w={36} h={34}><path d="M24 3c4-5 13 0 9 7l-5 5 1 2-3 3-10-10 3-3 2 1z" /><path d="M18 11L5 23l-3 7 2 2 7-3 13-12" {...line} strokeWidth={2} /></Icon>
          </button>
          <button type="button" aria-label="白黒に設定" className="h-[34px] w-[40px] border-2 border-[#b4b4b4] bg-[linear-gradient(#000_14px,#b4b4b4_14px,#b4b4b4_17px,#fff_17px)]" />
        </div>
        <button type="button" aria-label="塗りと線のカラー" className="ml-[10px]">
          <svg width="88" height="86" viewBox="0 0 88 86" aria-hidden="true">
            <path fillRule="evenodd" d="M27 27h58v57H27zM45 46v20h21V46z" fill="#fff" stroke="#000" strokeWidth="2" />
            <path d="M46 47h19v18H46z" fill="#282828" />
            <path d="M28 83L84 29" stroke="#b81414" strokeWidth="4" />
            <path d="M1 1h58v58H1z" fill="#636363" stroke="#000" strokeWidth="2" />
            <path d="M3 61h20v20H3z" fill="#fff" stroke="#b4b4b4" strokeWidth="2" />
            <path d="M4 80L22 62" stroke="#c65454" strokeWidth="2" />
            <path d="M68 10h6q7 0 7 8" fill="none" stroke="#b4b4b4" strokeWidth="4" />
            <path d="M61 10l9-6v12zM75 17h12l-6 8z" fill="#b4b4b4" />
          </svg>
        </button>
      </div>
      <Rule />
      <div className="grid shrink-0 grid-cols-[208px_1fr] pt-[3px] pb-[11px] pl-[10px]">
        <Field {...leftField} label="フォントサイズ" value="43" unit="px" icon={<Icon w={38} h={30}><Glyph x={0} y={28} size={22} weight={700}>T</Glyph><Glyph x={12} y={28} size={38} weight={700}>T</Glyph></Icon>} />
        <Field {...rightField} label="行送り" value="70" unit="px" icon={<Icon w={36} h={36}><Glyph x={15} y={16} size={19} family={sans}>A</Glyph><Glyph x={15} y={33} size={19} family={sans}>A</Glyph><path d="M11 18h22M11 35h22M5 19v13" {...line} strokeWidth={2} /><path d="M5 15l5 6H0zM5 35l5-6H0z" /></Icon>} />
        <Field {...leftField} label="カーニング" value="-" dim icon={<Icon w={36} h={34}><Glyph x={0} y={20} size={22} family={sans}>V</Glyph><Glyph x={18} y={20} size={22} family={sans}>A</Glyph><path d="M10 24L21 1M20 28h14" {...line} strokeWidth={2} /><path d="M17 28l6-4v8z" /></Icon>} />
        <Field {...rightField} label="トラッキング" value="100" icon={<Icon w={38} h={34} className="ml-[4px]"><path d="M0 0h36v21H0z" /><Glyph x={1} y={18} size={23} weight={700} fill="#282828" family={sans}>V</Glyph><Glyph x={17} y={18} size={23} weight={700} fill="#282828" family={sans}>A</Glyph><path d="M4 28h28" {...line} strokeWidth={2} /><path d="M0 28l6-4v8zM36 28l-6-4v8z" /></Icon>} />
      </div>
      <Rule />
      <div className="flex h-[60px] shrink-0 items-center pl-[10px]">
        <Field {...leftNarrow} label="線幅" value="-" unit="px" icon={<Icon w={32} h={24} className="ml-[4px]"><path d="M0 0h28v2H0zM0 8h28v4H0zM0 17h28v6H0z" /></Icon>} />
        <div className="relative mr-[4px] ml-[10px] flex h-[36px] flex-1 items-center rounded-sm border-2 border-[#303030] bg-[#1e1e1e]">
          <select aria-label="線の種類" className="h-full w-full appearance-none bg-transparent outline-none"><option></option></select>
          <span className="pointer-events-none absolute right-[9px] text-[#b4b4b4]"><Chevron /></span>
        </div>
      </div>
      <Rule />
      <div className="grid shrink-0 grid-cols-[208px_1fr] pt-[6px] pb-[12px] pl-[10px]">
        <Field {...leftNarrow} label="垂直比率" value="99" unit="%" icon={<Icon w={40} h={30}><Glyph x={14} y={28} size={37} weight={700}>T</Glyph><path d="M8 5v20" {...line} strokeWidth={2} /><path d="M8 1l5 7H3zM8 29l5-7H3z" /></Icon>} />
        <Field {...rightField} label="水平比率" value="100" unit="%" icon={<Icon w={36} h={36} className="ml-[2px]"><Glyph x={6} y={24} size={34} weight={700}>T</Glyph><path d="M4 30h26" {...line} strokeWidth={2} /><path d="M0 30l6-5v10zM34 30l-6-5v10z" /></Icon>} />
        <Field {...leftNarrow} label="ベースラインシフト" value="0" unit="px" icon={<Icon w={34} h={30}><Glyph x={1} y={19} size={23} family={sans}>A</Glyph><Glyph x={20} y={11} size={16} family={sans}>a</Glyph><path d="M0 22h18M19 14h11M25 18v10" {...line} strokeWidth={2} /><path d="M25 16l5 6H20z" /></Icon>} />
        <Field {...rightField} label="ツメ" value="0" unit="%" icon={<Icon w={34} h={30} className="ml-[4px]"><Glyph x={7} y={17} size={19} family="Noto Sans CJK JP, sans-serif">あ</Glyph><path d="M5 1v18M28 1v18" {...line} strokeWidth={2} strokeDasharray="2 2" /><path d="M0 25h7M25 25h8" {...line} strokeWidth={2} /><path d="M11 25l-6-4v8zM21 25l6-4v8z" /></Icon>} />
      </div>
      <Rule />
      <div className="flex h-[60px] shrink-0 items-center pl-[48px] text-[#b4b4b4]">
        <button type="button" aria-label="太字" className="flex h-[41px] w-[51px] items-center justify-center rounded-sm border-2 border-[#303030] bg-[#141414] text-[#2d8ceb]"><Icon w={24} h={22}><Glyph x={1} y={21} size={31} weight={700}>T</Glyph></Icon></button>
        <button type="button" aria-label="斜体" className="ml-[13px]"><Icon w={28} h={22}><Glyph x={2} y={21} size={30} weight={700} style="italic">T</Glyph></Icon></button>
        <button type="button" aria-label="オールキャップス" className="ml-[25px]"><Icon w={38} h={22}><Glyph x={0} y={21} size={28} weight={700}>T</Glyph><Glyph x={19} y={21} size={28} weight={700}>T</Glyph></Icon></button>
        <button type="button" aria-label="スモールキャップス" className="ml-[12px]"><Icon w={38} h={22}><Glyph x={0} y={21} size={28} weight={700}>T</Glyph><Glyph x={20} y={21} size={22} weight={700}>T</Glyph></Icon></button>
        <button type="button" aria-label="上付き文字" className="ml-[26px]"><Icon w={32} h={24}><Glyph x={0} y={22} size={28} weight={700}>T</Glyph><Glyph x={20} y={10} size={14} weight={700}>1</Glyph></Icon></button>
        <button type="button" aria-label="下付き文字" className="ml-[18px]"><Icon w={30} h={24}><Glyph x={0} y={22} size={28} weight={700}>T</Glyph><Glyph x={20} y={24} size={14} weight={700}>1</Glyph></Icon></button>
      </div>
      <div className="flex h-[46px] shrink-0 items-center pl-[22px] text-[22px] whitespace-nowrap text-[#929292]">
        <label className="flex w-[196px] items-center gap-[6px]">
          <input type="checkbox" className="h-[28px] w-[28px] appearance-none rounded-sm border-4 border-[#8c8c8c]" />合字
        </label>
        <label className="flex items-center gap-[6px]">
          <input type="checkbox" className="h-[28px] w-[28px] appearance-none rounded-sm border-4 border-[#8c8c8c]" />ヒンディー数字
        </label>
      </div>
    </section>
  );
}

/* ---------- align panel ---------- */

const alignIcons: [string, string][] = [
  ["左揃え", "M3 0h2v36H3zM7 4h16v12H7zM7 20h26v10H7z"],
  ["水平方向中央揃え", "M17 0h2v36h-2zM9 4h18v12H9zM5 20h26v10H5z"],
  ["右揃え", "M31 0h2v36h-2zM13 4h16v12H13zM3 20h26v10H3z"],
  ["上揃え", "M0 2h36v2H0zM6 6h10v26H6zM20 6h12v16H20z"],
  ["垂直方向中央揃え", "M0 16h36v2H0zM6 4h10v26H6zM20 8h12v18H20z"],
  ["下揃え", "M0 32h36v2H0zM6 4h10v26H6zM20 14h12v16H20z"],
];
const distributeIcons: [string, string][] = [
  ["上端で配置", "M0 2h36v2H0zM10 6h16v8H10zM0 20h36v2H0zM6 24h24v10H6z"],
  ["垂直方向中央で配置", "M0 8h36v2H0zM10 4h16v10H10zM0 26h36v2H0zM6 22h24v10H6z"],
  ["下端で配置", "M10 2h16v8H10zM0 12h36v2H0zM6 20h24v8H6zM0 32h36v2H0z"],
  ["左端で配置", "M2 0h2v36H2zM6 6h10v24H6zM22 0h2v36h-2zM26 10h8v16h-8z"],
  ["水平方向中央で配置", "M8 0h2v36H8zM4 6h10v24H4zM26 0h2v36h-2zM22 10h10v16H22z"],
  ["右端で配置", "M2 6h10v24H2zM14 0h2v36h-2zM22 10h8v16h-8zM32 0h2v36h-2z"],
];

function IconRow({ icons }: { icons: [string, string][] }) {
  return (
    <div className="flex h-[36px] justify-between pr-[8px] pl-[22px] text-[#3e3e3e]">
      {icons.map(([label, d]) => (
        <button key={label} type="button" aria-label={label}><Icon><path d={d} /></Icon></button>
      ))}
    </div>
  );
}

function AlignPanel() {
  return (
    <section className="flex w-[406px] shrink-0 flex-col bg-[#282828] text-[#9a9a9a]">
      <div className="flex h-[59px] items-start">
        <Tab className="ml-[24px]">段落</Tab>
        <Tab active className="ml-[78px] w-[82px]"><span className="pl-[2px]">整列</span></Tab>
      </div>
      <label className="flex h-[40px] items-center pl-[13px] whitespace-nowrap">
        レイヤーを整列 :
        <span className="relative ml-auto flex h-[34px] w-[220px] items-center bg-[#2a2a2a] text-[#555]">
          <select className="w-full appearance-none bg-transparent pl-[14px] outline-none"><option>選択範囲</option></select>
          <span className="pointer-events-none absolute right-[9px]"><Chevron /></span>
        </span>
      </label>
      <div className="h-[11px]" />
      <IconRow icons={alignIcons} />
      <div className="mx-[12px] mt-[9px] h-[2px] bg-[#303030]" />
      <div className="flex h-[38px] items-center pb-[3px] pl-[13px]">レイヤーを配置 :</div>
      <IconRow icons={distributeIcons} />
    </section>
  );
}

/* ---------- page ---------- */

export default function App() {
  return (
    <main className="flex h-screen flex-col overflow-hidden bg-[#171717] font-['Noto_Sans_CJK_JP',sans-serif] text-[22px] leading-[30px]">
      <div className="h-[8px] shrink-0 border-b-2 border-black bg-[#d2cccf]" />
      <Toolbar />
      <div className="mt-[4px] flex min-h-0 flex-[1240_1_0%] gap-[8px]">
        <ProjectPanel />
        <CompositionPanel />
        <div className="flex w-[406px] shrink-0 flex-col">
          <AudioPanel />
          <CharacterPanel />
        </div>
      </div>
      <div className="mt-[8px] flex min-h-0 flex-[686_1_0%] gap-[8px]">
        <TimelinePanel />
        <AlignPanel />
      </div>
    </main>
  );
}
